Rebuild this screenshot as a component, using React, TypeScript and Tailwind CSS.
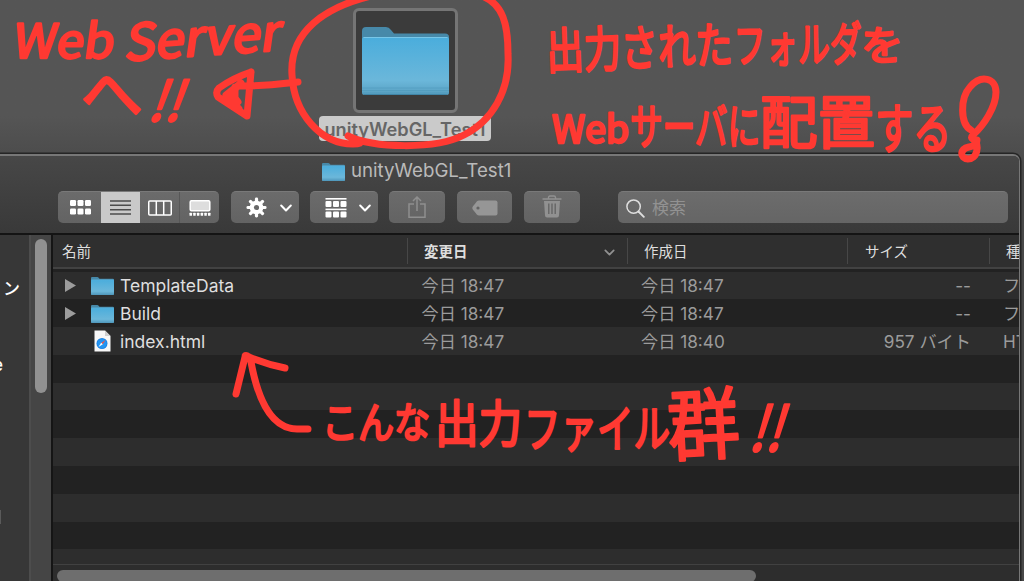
import type { ReactNode } from 'react';

const FONT = "font-[Inter,'Noto_Sans_CJK_JP',sans-serif]";

const files = [
  { name: 'TemplateData', folder: true, modified: '今日 18:47', created: '今日 18:47', size: '--', kind: 'フォルダ' },
  { name: 'Build', folder: true, modified: '今日 18:47', created: '今日 18:47', size: '--', kind: 'フォルダ' },
  { name: 'index.html', folder: false, modified: '今日 18:47', created: '今日 18:40', size: '957 バイト', kind: 'HTMLテキスト' },
];

const emptyRows = [0, 1, 2, 3, 4, 5, 6, 7];

function FolderIcon({ className }: { className: string }) {
  return (
    <svg viewBox="0 0 87 68" preserveAspectRatio="none" className={className}>
      <defs>
        <linearGradient id="folderFront" x1="0" y1="0" x2="0" y2="1">
          <stop offset="0" stopColor="#4aaddc" />
          <stop offset="0.75" stopColor="#6bb7da" />
          <stop offset="1" stopColor="#579fc0" />
        </linearGradient>
      </defs>
      <path d="M0 4Q0 0 4 0H24Q27 0 29 3L32 6.500H83Q87 6.500 87 10V30H0Z" fill="#4789a9" />
      <rect x="0" y="10" width="87" height="58" rx="2.500" fill="url(#folderFront)" />
      <path d="M1.500 10.500H85.500" stroke="#78c6e8" strokeWidth="1" />
      <path d="M0 61H87M0 63.500H87M0 66H87" stroke="#4b96ba" strokeWidth="0.700" opacity="0.700" />
      <path d="M2 67.600H85" stroke="#397c9d" strokeWidth="0.800" />
    </svg>
  );
}

function HtmlFileIcon() {
  return (
    <svg viewBox="0 0 17 22" className="h-[22px] w-[17px]">
      <path d="M0.500 0.500H11L16.500 6V21.500H0.500Z" fill="#f7f7f7" />
      <path d="M11 0.500V6H16.500Z" fill="#cfcfcf" />
      <circle cx="8" cy="13.500" r="5.500" fill="#1b83e6" />
      <circle cx="8" cy="13.500" r="4.600" fill="#2495f2" />
      <path d="M11.500 10L8.800 14.300L7.200 12.700Z" fill="#f0544a" />
      <path d="M4.500 17L7.200 12.700L8.800 14.300Z" fill="#fff" />
    </svg>
  );
}

function Chevron({ className }: { className: string }) {
  return (
    <svg viewBox="0 0 12 8" fill="none" stroke="currentColor" strokeWidth="2" strokeLinecap="round" strokeLinejoin="round" className={className}>
      <path d="M1.200 1.500L6 6.500L10.800 1.500" />
    </svg>
  );
}

function ToolButton({ className, children }: { className: string; children: ReactNode }) {
  return (
    <button
      className={`flex h-8 shrink-0 items-center justify-center rounded-[5px] border-t border-[#797979] bg-gradient-to-b from-[#6b6b6b] to-[#636363] ${className}`}
    >
      {children}
    </button>
  );
}

function ViewSwitcher() {
  return (
    <div className="flex h-8 w-[161px] shrink-0 overflow-hidden rounded-[5px] border-t border-[#797979] bg-gradient-to-b from-[#6b6b6b] to-[#636363]">
      <button className="flex w-[43px] items-center justify-center pl-0.5">
        <svg viewBox="0 0 21 15" className="h-[15px] w-[21px]" fill="#fff">
          {[0, 7.5, 15].map((x) => (
            <g key={x}>
              <rect x={x} y="0" width="6" height="6" rx="1.200" />
              <rect x={x} y="8.500" width="6" height="6" rx="1.200" />
            </g>
          ))}
        </svg>
      </button>
      <button className="flex w-[39px] items-center justify-center bg-[#c9c9c9]">
        <svg viewBox="0 0 21 15" className="h-[15px] w-[21px]" stroke="#4c4c4c" strokeWidth="1.500">
          <path d="M0 1H21M0 5.300H21M0 9.700H21M0 14H21" />
        </svg>
      </button>
      <button className="flex w-10 items-center justify-center border-r border-[#575757]">
        <svg viewBox="0 0 24 16" className="h-4 w-6" fill="none" stroke="#fff" strokeWidth="1.500">
          <rect x="0.750" y="1" width="22.500" height="14" rx="1" />
          <path d="M8.300 1V15M15.700 1V15" />
        </svg>
      </button>
      <button className="flex w-[39px] items-center justify-center">
        <svg viewBox="0 0 22 16" className="h-4 w-[22px]">
          <rect x="1.200" y="0.800" width="19.600" height="10" rx="1.200" fill="#ddd" stroke="#fff" strokeWidth="1.500" />
          {[0.5, 4.2, 7.9, 11.6, 15.3, 19].map((x) => (
            <rect key={x} x={x} y="12.800" width="2.500" height="3" rx="0.500" fill="#fff" />
          ))}
        </svg>
      </button>
    </div>
  );
}

function GearIcon() {
  return (
    <svg viewBox="-11 -11 22 22" className="h-[21px] w-[21px]">
      {[0, 45, 90, 135].map((angle) => (
        <rect key={angle} x="-1.700" y="-10.500" width="3.400" height="21" rx="1.500" fill="#fff" transform={`rotate(${angle})`} />
      ))}
      <circle r="7.200" fill="#fff" />
      <circle r="2.700" fill="#686868" />
    </svg>
  );
}

function Toolbar() {
  return (
    <div className="flex h-8 pl-[58px] pr-[11px]">
      <ViewSwitcher />
      <ToolButton className="ml-3 w-[68px] gap-[13px] pl-[7px]">
        <GearIcon />
        <Chevron className="h-2 w-3 text-white" />
      </ToolButton>
      <ToolButton className="ml-[11px] w-[68px] gap-3 pl-[7px]">
        <svg viewBox="0 0 22 20" className="h-5 w-[22px]" fill="#fff">
          <rect x="0.500" y="0" width="21" height="1.600" />
          <rect x="0.500" y="10.600" width="21" height="1.600" />
          {[0.5, 8, 15.500].map((x) => (
            <g key={x}>
              <rect x={x} y="3" width="6" height="6" rx="1" />
              <rect x={x} y="13.600" width="6" height="6" rx="1" />
            </g>
          ))}
        </svg>
        <Chevron className="h-2 w-3 text-white" />
      </ToolButton>
      <ToolButton className="ml-[11px] w-14">
        <svg viewBox="0 0 18 22" className="-mt-0.5 h-[22px] w-[18px]" fill="none" stroke="#8f8f8f" strokeWidth="1.500">
          <path d="M6 8H1V21.200H17V8H12M9 15V1M5 5L9 1L13 5" />
        </svg>
      </ToolButton>
      <ToolButton className="ml-3 w-[55px]">
        <svg viewBox="0 0 26 16" className="h-4 w-[26px]">
          <path d="M7 0.500H23.500Q25.500 0.500 25.500 2.500V13.500Q25.500 15.500 23.500 15.500H7Q5.800 15.500 5 14.700L0.800 9.500Q-0.200 8 0.800 6.500L5 1.300Q5.800 0.500 7 0.500Z" fill="#969696" />
          <circle cx="6" cy="8" r="1.600" fill="#636363" />
        </svg>
      </ToolButton>
      <ToolButton className="ml-3 w-14">
        <svg viewBox="0 0 20 23" className="-mt-0.5 h-[23px] w-5">
          <path d="M6.500 3.500V2.500Q6.500 1 8 1H12Q13.500 1 13.500 2.500V3.500M0.500 4H19.500" fill="none" stroke="#919191" strokeWidth="1.400" />
          <path d="M2 6H18L17 20.500Q16.900 22.500 15 22.500H5Q3.100 22.500 3 20.500Z" fill="#919191" />
          <path d="M6.800 8.500V19M10 8.500V19M13.200 8.500V19" stroke="#626262" strokeWidth="1.300" />
        </svg>
      </ToolButton>
      <div className="ml-[38px] flex h-8 flex-1 items-center rounded-[5px] border-t border-[#797979] bg-gradient-to-b from-[#6c6c6c] to-[#656565] pl-2 pt-px">
        <svg viewBox="0 0 19 19" className="h-[19px] w-[19px]" fill="none" stroke="#dedede" strokeWidth="1.500" strokeLinecap="round">
          <circle cx="7.600" cy="7.600" r="6.700" />
          <path d="M12.500 12.500L17.800 17.800" strokeWidth="1.900" />
        </svg>
        <span className="ml-[7px] text-[17px] leading-none text-[#929292]">検索</span>
      </div>
    </div>
  );
}

function Sidebar() {
  return (
    <>
      <div className="w-[29px] shrink-0 overflow-hidden bg-[#373737] pt-[43px] font-medium text-white">
        <div className="h-[22px] pl-[3px] text-[17px] leading-[22px]">ン</div>
        <div className="-ml-[7px] mt-[54px] h-[22px] text-[17px] leading-[22px]">e</div>
        <div className="mt-[134px] h-3.5 w-px bg-[#5a5a5a]" />
      </div>
      <div className="w-[22px] shrink-0 border-l-2 border-[#4d4d4d] bg-[#454545] pl-1 pt-1">
        <div className="h-[154px] w-3 rounded-full bg-[#919191]" />
      </div>
      <div className="w-0.5 shrink-0 bg-[#151515]" />
    </>
  );
}

function ListHeader() {
  return (
    <div className="flex h-[34px] shrink-0 items-center border-b-2 border-[#424242] bg-[#2f2f2f] text-[14.5px] leading-none text-[#dedede]">
      <div className="w-[354px] shrink-0 pl-[9px] pt-0.5">名前</div>
      <div className="flex h-[26px] w-[220px] shrink-0 items-center justify-between border-l border-[#474747] pl-4 pr-3 pt-0.5 font-bold">
        変更日
        <Chevron className="h-[7px] w-[11px] text-[#919191]" />
      </div>
      <div className="flex h-[26px] w-[220px] shrink-0 items-center border-l border-[#474747] pl-4 pt-0.5">作成日</div>
      <div className="flex h-[26px] w-[142px] shrink-0 items-center border-l border-[#474747] pl-[17px] pt-0.5">サイズ</div>
      <div className="flex h-[26px] shrink-0 items-center border-l border-[#474747] pl-4 pt-0.5">種類</div>
    </div>
  );
}

function FileList() {
  return (
    <div className="flex min-w-0 flex-1 flex-col overflow-hidden bg-[#222]">
      <ListHeader />
      <div className="mt-[2.5px] h-[292.5px] shrink-0 overflow-hidden">
        {files.map((file) => (
          <div key={file.name} className="flex h-[27.8px] items-center whitespace-nowrap pt-px text-[17.2px] leading-none text-[#9b9b9b] odd:bg-[#2d2d2d] even:bg-[#222]">
            <div className="flex w-[368.5px] shrink-0 items-center pl-3">
              <svg viewBox="0 0 11 13" className="h-[13px] w-[11px]">
                {file.folder && <path d="M0 0L11 6.500L0 13Z" fill="#9c9c9c" />}
              </svg>
              <div className="ml-[15px] flex w-[23px] justify-center">
                {file.folder ? <FolderIcon className="h-[18px] w-[23px]" /> : <HtmlFileIcon />}
              </div>
              <span className="ml-[6px] text-[17.5px] text-[#dfdfdf]">{file.name}</span>
            </div>
            <div className="w-[219.5px] shrink-0">{file.modified}</div>
            <div className="w-[200px] shrink-0">{file.created}</div>
            <div className="w-[130px] shrink-0 text-right">{file.size}</div>
            <div className="shrink-0 pl-8">{file.kind}</div>
          </div>
        ))}
        {emptyRows.map((row) => (
          <div key={row} className="h-[27.8px] odd:bg-[#2d2d2d] even:bg-[#222]" />
        ))}
      </div>
      <div className="flex-1 border-t border-[#414141] bg-[#2d2d2d] pl-1 pt-[5px]">
        <div className="h-3 w-[699px] rounded-full bg-[#6e6e6e]" />
      </div>
    </div>
  );
}

function FinderWindow() {
  return (
    <div className="mr-1 flex h-[428px] flex-col overflow-hidden rounded-tr-[7px] border-r border-t-2 border-[#777] bg-[#393939] shadow-[0_0_0_1.500px_#252525]">
      <div className="h-[79px] shrink-0 border-b-2 border-[#141414] bg-gradient-to-b from-[#474747] to-[#393939]">
        <div className="flex h-[35px] items-center pb-1 pl-[322px]">
          <FolderIcon className="h-[18px] w-[23px]" />
          <span className="ml-[6px] text-[18.7px] leading-none text-[#bababa]">unityWebGL_Test1</span>
        </div>
        <Toolbar />
      </div>
      <div className="flex min-h-0 flex-1">
        <Sidebar />
        <FileList />
      </div>
    </div>
  );
}

function DesktopFolder() {
  return (
    <div className="flex h-[154px] flex-col items-center pr-[214px] pt-2">
      <div className="flex h-[105px] w-[105px] shrink-0 items-center justify-center rounded-[6px] border-[3px] border-[#757575] bg-[#3b3b3b]">
        <FolderIcon className="h-[68px] w-[87px]" />
      </div>
      <div className="mt-[3px] flex h-[25px] w-[172px] shrink-0 items-center justify-center rounded-[4px] bg-[#cacaca] pt-px text-[18.2px] font-semibold leading-none text-[#666]">
        unityWebGL_Test1
      </div>
    </div>
  );
}

type NoteProps = { x: number; y: number; size: number; width: number; skew?: number; rotate?: number; children: string };

function Note({ x, y, size, width, skew = 0, rotate = 0, children }: NoteProps) {
  return (
    <text
      transform={`translate(${x} ${y}) rotate(${rotate}) skewX(${skew})`}
      fontSize={size}
      textLength={width}
      lengthAdjust="spacingAndGlyphs"
    >
      {children}
    </text>
  );
}

function Annotations() {
  return (
    <svg viewBox="0 0 1024 581" className="pointer-events-none absolute inset-0 h-[581px] w-[1024px]">
      {/* Pen notes */}
      <g className="font-['Noto_Sans_CJK_JP',sans-serif]" fill="#ff3932" stroke="#ff3932" strokeWidth="2.600" strokeLinejoin="round">
        <Note x={12} y={58} size={47} width={101} skew={-8}>Web</Note>
        <Note x={124} y={61} size={50} width={156} skew={-12} rotate={-4}>Server</Note>
        <Note x={81} y={116} size={60} width={62}>へ</Note>
        <Note x={147} y={121} size={55} width={33} skew={-20}>!!</Note>
        <Note x={547} y={69} size={49} width={186} rotate={-2}>出力された</Note>
        <Note x={734} y={63} size={47} width={128} rotate={-1}>フォルダ</Note>
        <Note x={861} y={60} size={40} width={42}>を</Note>
        <Note x={552} y={143} size={38} width={77}>Web</Note>
        <Note x={630} y={144} size={48} width={130}>サーバに</Note>
        <Note x={760} y={143} size={57} width={115}>配置</Note>
        <Note x={875} y={149} size={54} width={76}>する</Note>
        <Note x={322} y={438} size={42} width={108}>こんな</Note>
        <Note x={435} y={442} size={50} width={87}>出力</Note>
        <Note x={524} y={447} size={50} width={146}>ファイル</Note>
        <Note x={669} y={455} size={78} width={72} rotate={-3}>群</Note>
        <Note x={748} y={451} size={62} width={33} skew={-17}>!!</Note>
      </g>
      {/* Circle, arrows and the balloon mark */}
      <g fill="none" stroke="#ff3932" strokeWidth="7" strokeLinecap="round" strokeLinejoin="round">
        <path d="M371 -4C326 7 289 31 292 75C294 114 321 144 353 144C358 144 361 143 361 142M348 136C373 148 435 150 464 135C492 121 510 91 508 54C508 24 503 4 482 -4" />
        <path d="M298 82C286 83 275 86 240 86M251 72L247 116L218 97Q215 92 219 88Q233 78 251 72M241 83L226 95L239 109M235 87V103M240 84L231 93L238 102" />
        <path d="M236 394L245 357Q245 354 249 357C263 363 275 366 285 368M251 362C258 400 271 429 297 429H308" />
        <path d="M971 130C960 124 960 98 970 87C981 74 996 78 996 92C996 107 984 125 973 135C970 138 972 138 974 140C980 146 977 159 968 159C959 158 960 149 969 147Q977 146 977 140" />
      </g>
    </svg>
  );
}

export default function App() {
  return (
    <div className={`relative h-[581px] w-[1024px] overflow-hidden bg-[#4b4b4b] bg-gradient-to-b from-[#555] via-[#555] via-20% to-[#484848] to-30% ${FONT}`}>
      <DesktopFolder />
      <FinderWindow />
      <Annotations />
    </div>
  );
}
